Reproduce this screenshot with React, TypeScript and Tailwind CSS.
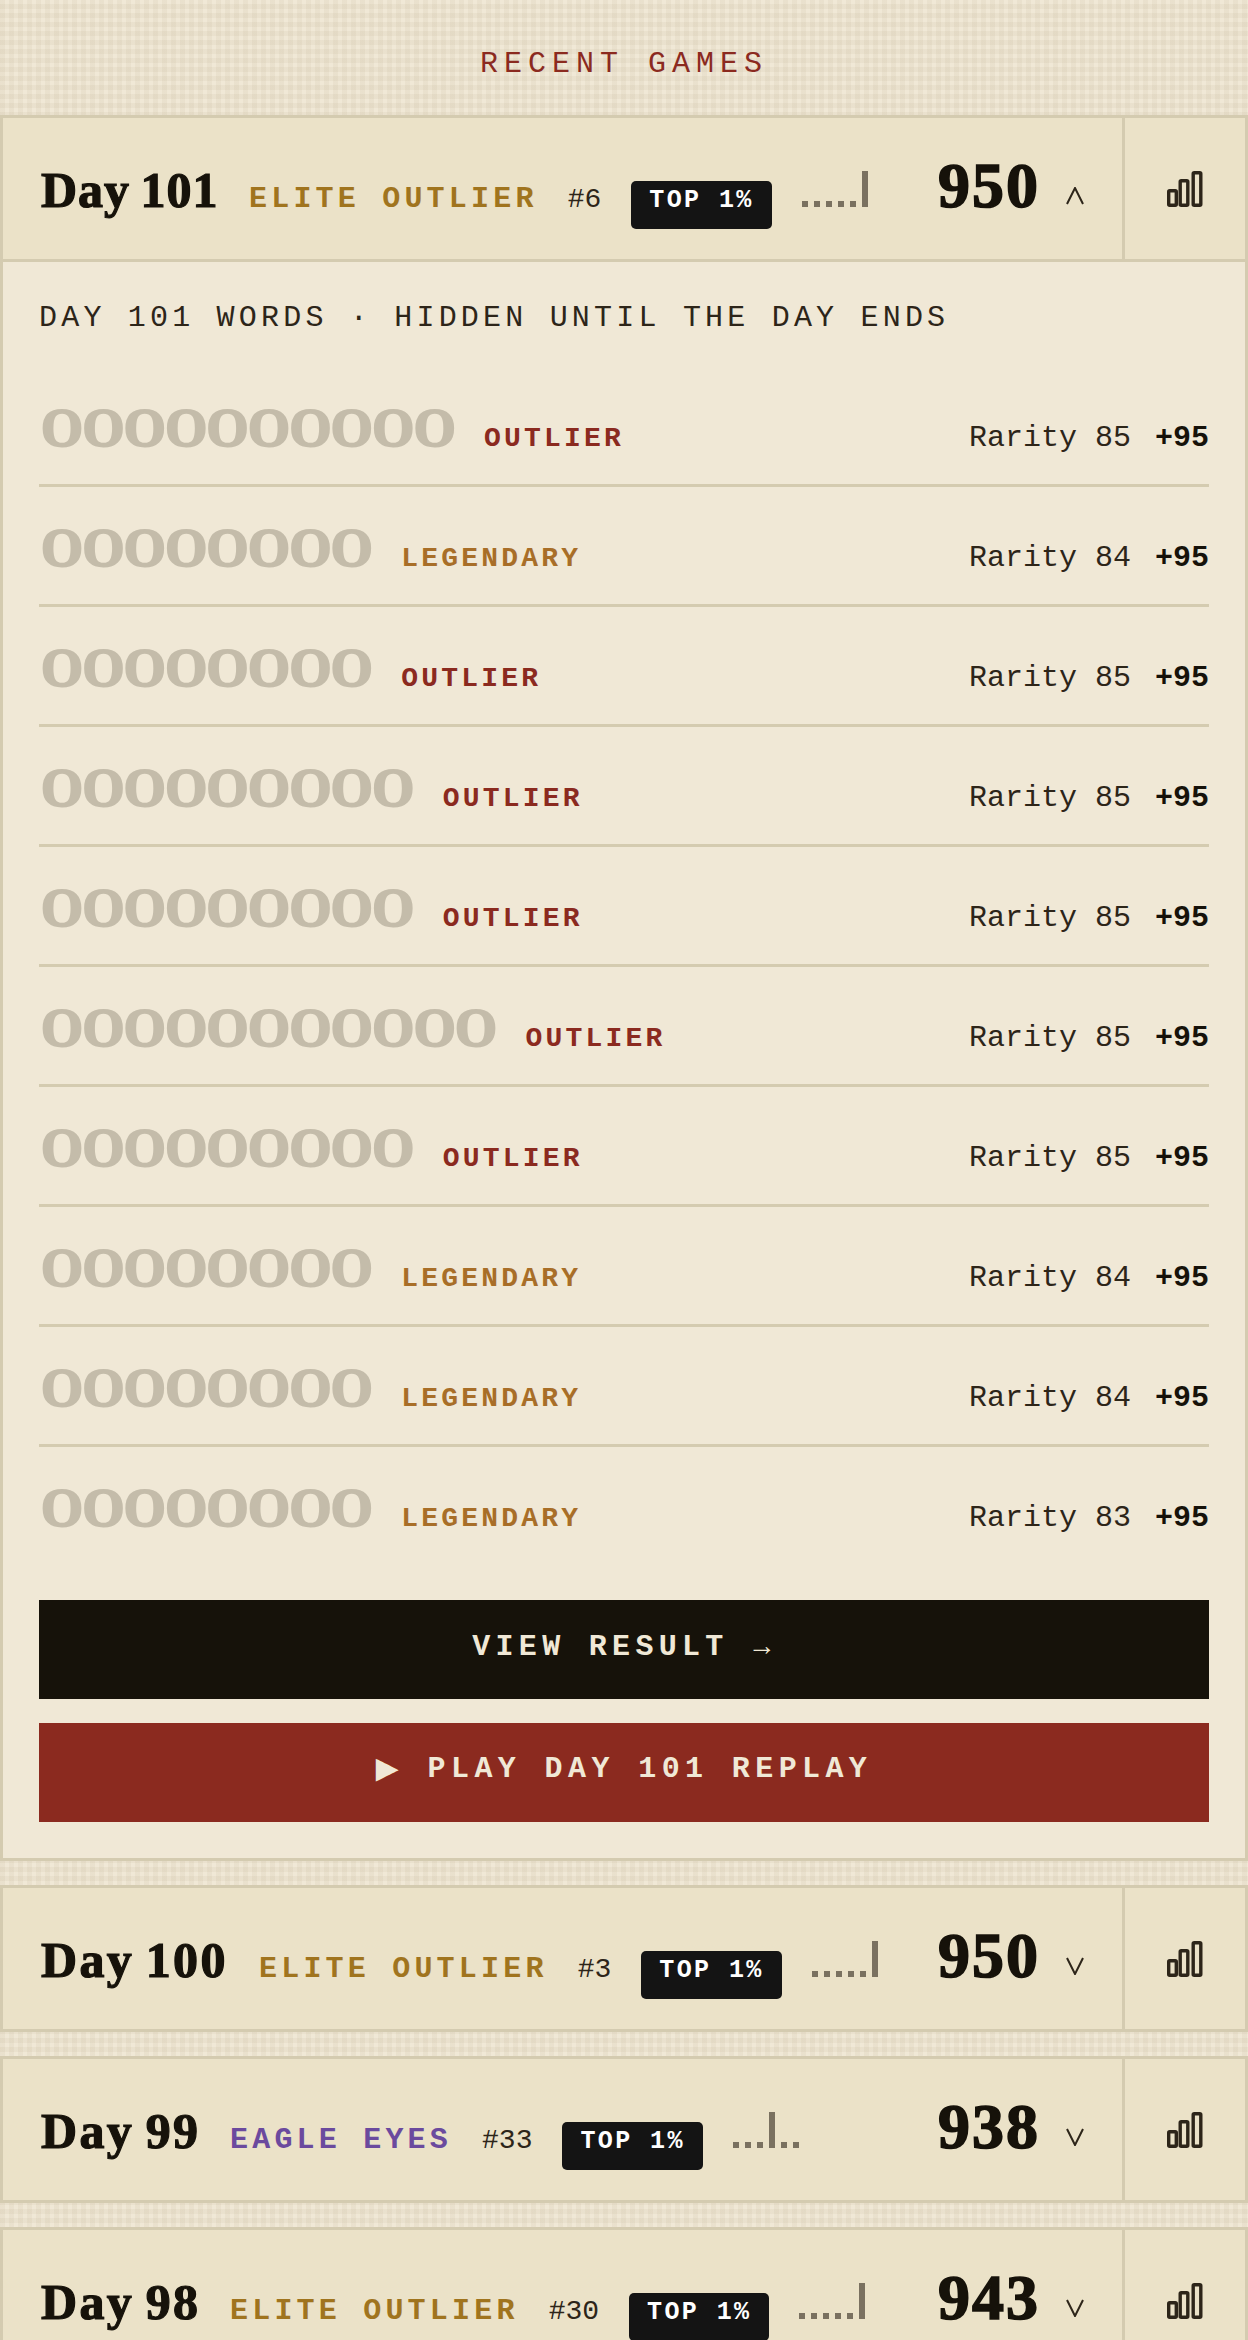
import React from "react";

const mono = "font-['Liberation_Mono',monospace]";
const serif = "font-['Liberation_Serif',serif]";

const words = [
  { len: 10, tag: "OUTLIER", rarity: 85 },
  { len: 8, tag: "LEGENDARY", rarity: 84 },
  { len: 8, tag: "OUTLIER", rarity: 85 },
  { len: 9, tag: "OUTLIER", rarity: 85 },
  { len: 9, tag: "OUTLIER", rarity: 85 },
  { len: 11, tag: "OUTLIER", rarity: 85 },
  { len: 9, tag: "OUTLIER", rarity: 85 },
  { len: 8, tag: "LEGENDARY", rarity: 84 },
  { len: 8, tag: "LEGENDARY", rarity: 84 },
  { len: 8, tag: "LEGENDARY", rarity: 83 },
];

const games = [
  { day: 101, titleW: "w-[179px] tracking-[1px]", label: "ELITE OUTLIER", rank: 6, peak: 5, score: 950, open: true },
  { day: 100, titleW: "w-[189px] tracking-[2.3px]", label: "ELITE OUTLIER", rank: 3, peak: 5, score: 950, open: false },
  { day: 99, titleW: "w-[160px] tracking-[2.3px]", label: "EAGLE EYES", rank: 33, peak: 3, score: 938, open: false },
  { day: 98, titleW: "w-[160px] tracking-[2.3px]", label: "ELITE OUTLIER", rank: 30, peak: 5, score: 943, open: false },
];

function Spark({ peak }: { peak: number }) {
  return (
    <div className="flex items-end gap-[6px] h-[36px]">
      {[0, 1, 2, 3, 4, 5].map((i) => (
        <div key={i} className={i === peak ? "w-[6px] h-[36px] bg-[#7a7160]" : "w-[6px] h-[6px] bg-[#7a7160]"} />
      ))}
    </div>
  );
}

function StatsIcon() {
  return (
    <svg width="36" height="36" viewBox="0 0 36 36" fill="none" stroke="#2d2519" strokeWidth="3.4">
      <rect x="1.7" y="19.7" width="7.6" height="14.6" rx="1" />
      <rect x="13.2" y="9.7" width="7.6" height="24.6" rx="1" />
      <rect x="26.2" y="1.7" width="7.6" height="32.6" rx="1" />
    </svg>
  );
}

function Chevron({ up }: { up: boolean }) {
  return (
    <svg width="18" height="18" viewBox="0 0 18 18" fill="none" stroke="#2d2519" strokeWidth="2" className="self-center mb-[24px] ml-[26px]">
      {up ? <polyline points="1,17 9,1 17,17" /> : <polyline points="1,1 9,17 17,1" />}
    </svg>
  );
}

function Header({ game }: { game: (typeof games)[number] }) {
  return (
    <div className={`flex bg-[#ebe2c8] ${game.open ? "border-b-[3px] border-[#d4cbb0] h-[144px]" : "h-[141px]"}`}>
      <div className="flex-1 flex items-baseline pl-[38px] pr-[38px] pt-[38px]">
        <div className={`${serif} ${game.titleW} whitespace-nowrap font-bold text-[50px] leading-[60px] text-[#16120a] [-webkit-text-stroke:1.2px_#16120a] [word-spacing:-3px]`}>
          Day {game.day}
        </div>
        <div className={`${mono} font-bold text-[30px] tracking-[4.2px] ml-[29px] ${game.label === "EAGLE EYES" ? "text-[#6b4a9e]" : "text-[#a0741e]"}`}>
          {game.label}
        </div>
        <div className={`${mono} text-[28px] text-[#2d2519] ml-[30px]`}>#{game.rank}</div>
        <div className={`${mono} font-bold text-[25px] tracking-[2.4px] text-white bg-[#141414] rounded-[5px] px-[18px] pt-[5px] pb-[13px] leading-[30px] ml-[30px]`}>
          TOP 1%
        </div>
        <div className="ml-[30px]">
          <Spark peak={game.peak} />
        </div>
        <div className={`${serif} font-bold text-[64px] leading-[60px] tracking-[2px] text-[#16120a] [-webkit-text-stroke:1.6px_#16120a] ml-auto`}>
          {game.score}
        </div>
        <Chevron up={game.open} />
      </div>
      <div className="w-[123px] border-l-[3px] border-[#d4cbb0] flex items-center justify-center">
        <StatsIcon />
      </div>
    </div>
  );
}

function WordRow({ word, last }: { word: (typeof words)[number]; last: boolean }) {
  return (
    <div className={`flex items-baseline h-[120px] pt-[34px] ${last ? "" : "border-b-[3px] border-[#d4cbb0]"}`}>
      <div className={`${serif} font-bold text-[54px] leading-[54px] tracking-[-0.6px] pl-[2px] text-[#c4bcaa] [-webkit-text-stroke:2px_#c4bcaa]`}>
        {"O".repeat(word.len)}
      </div>
      <div className={`${mono} font-bold text-[28px] tracking-[3.2px] ml-[29px] ${word.tag === "OUTLIER" ? "text-[#8b2a1f]" : "text-[#a86e28]"}`}>
        {word.tag}
      </div>
      <div className={`${mono} text-[30px] text-[#2d2519] ml-auto`}>Rarity {word.rarity}</div>
      <div className={`${mono} font-bold text-[30px] text-[#16120a] ml-[24px]`}>+95</div>
    </div>
  );
}

export default function App() {
  return (
    <div className="h-[2340px] overflow-hidden bg-[#f0e8d6] bg-[repeating-linear-gradient(0deg,rgba(150,130,90,0.07)_0,rgba(150,130,90,0.07)_5px,transparent_5px,transparent_9px),repeating-linear-gradient(90deg,rgba(150,130,90,0.07)_0,rgba(150,130,90,0.07)_5px,transparent_5px,transparent_9px)]">
      <div className={`${mono} h-[115px] pt-[14px] flex items-center justify-center text-[30px] tracking-[6px] text-[#8b2a1f]`}>RECENT GAMES</div>
      <div className="flex flex-col gap-[24px]">
        {games.map((game) => (
          <div key={game.day} className="border-[3px] border-[#d4cbb0]">
            <Header game={game} />
            {game.open && (
              <div className="bg-[#f0e8d6] px-[36px] pt-[39px] pb-[36px]">
                <div className={`${mono} text-[30px] tracking-[4.2px] leading-[34px] text-[#2d2519] mb-[32px]`}>
                  DAY {game.day} WORDS · HIDDEN UNTIL THE DAY ENDS
                </div>
                {words.map((w, i) => (
                  <WordRow key={i} word={w} last={i === words.length - 1} />
                ))}
                <button className={`${mono} mt-[33px] w-full h-[99px] pb-[4px] bg-[#16120a] text-[#f0e8d6] font-bold text-[30px] tracking-[5.3px] flex items-center justify-center`}>
                  VIEW RESULT <span className="font-normal ml-[25px] text-[28px]">→</span>
                </button>
                <button className={`${mono} mt-[24px] w-full h-[99px] pb-[6px] bg-[#8b2a1f] text-[#f0e8d6] font-bold text-[30px] tracking-[5.4px] flex items-center justify-center`}>
                  <span className="mr-[29px] text-[38px] leading-none tracking-normal">▶</span>PLAY DAY {game.day} REPLAY
                </button>
              </div>
            )}
          </div>
        ))}
      </div>
    </div>
  );
}
